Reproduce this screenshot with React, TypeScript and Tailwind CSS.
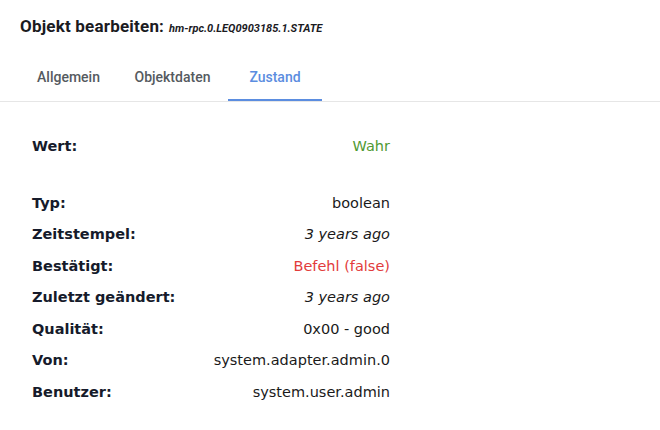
import React from "react";

const rows: { label: string; value: string; cls: string }[] = [
  { label: "Typ:", value: "boolean", cls: "text-[#1a1a1a]" },
  { label: "Zeitstempel:", value: "3 years ago", cls: "italic text-[#1a1a1a]" },
  { label: "Bestätigt:", value: "Befehl (false)", cls: "text-[#e23b3b]" },
  { label: "Zuletzt geändert:", value: "3 years ago", cls: "italic text-[#1a1a1a]" },
  { label: "Qualität:", value: "0x00 - good", cls: "text-[#1a1a1a]" },
  { label: "Von:", value: "system.adapter.admin.0", cls: "text-[#1a1a1a]" },
  { label: "Benutzer:", value: "system.user.admin", cls: "text-[#1a1a1a]" },
];

function Row({ label, value, cls }: { label: string; value: string; cls: string }) {
  return (
    <div className="flex h-[31.5px] items-center justify-between">
      <span className="font-bold text-[#161b2b]">{label}</span>
      <span className={cls}>{value}</span>
    </div>
  );
}

export default function App() {
  return (
    <div className="h-[430px] w-[660px] bg-white overflow-hidden">
      <div className="flex items-baseline px-5 pt-[14px] h-[46px] font-['Roboto',sans-serif] text-[#1b1b1f]">
        <span className="text-[17px] font-bold tracking-[0.2px]">Objekt bearbeiten:</span>
        <span className="ml-[5px] text-[11px] font-bold italic">hm-rpc.0.LEQ0903185.1.STATE</span>
      </div>
      <div className="flex border-b border-[#e6e6e6] pl-5 h-[56px] font-['Roboto',sans-serif] text-[14px] font-medium">
        <div className="flex w-[97px] items-center justify-center pt-[8px] text-[#555a60]">Allgemein</div>
        <div className="flex w-[111px] items-center justify-center pt-[8px] text-[#555a60]">Objektdaten</div>
        <div className="flex w-[94px] items-center justify-center border-b-2 border-[#5b8de0] pt-[10px] text-[#5b8de0]">Zustand</div>
      </div>
      <div className="ml-8 mt-[29px] w-[358px] font-['DejaVu_Sans',sans-serif] text-[14.5px]">
        <Row label="Wert:" value="Wahr" cls="text-[#4f9a32]" />
        <div className="h-[25.5px]" />
        {rows.map((r) => (
          <Row key={r.label} {...r} />
        ))}
      </div>
    </div>
  );
}
